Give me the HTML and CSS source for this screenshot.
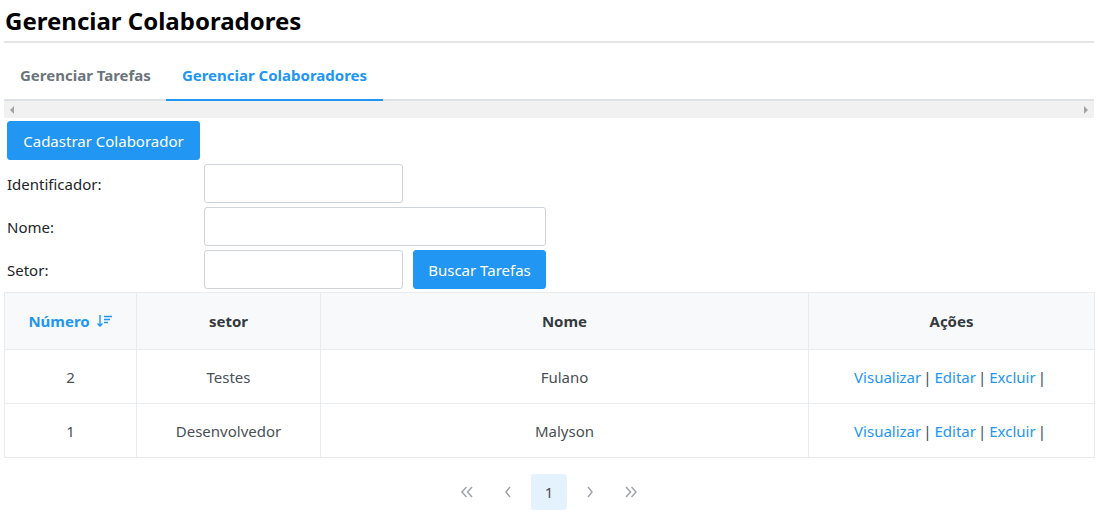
FILE: index.html
```html
<!DOCTYPE html>
<html lang="pt-BR">
<head>
<meta charset="utf-8">
<title>Gerenciar Colaboradores</title>
<link rel="stylesheet" href="styles.css">
</head>
<body>
<div class="page">
  <h1 class="title">Gerenciar Colaboradores</h1>
  <div class="tabs">
    <a class="tab">Gerenciar Tarefas</a>
    <a class="tab active">Gerenciar Colaboradores</a>
  </div>
  <div class="hscroll">
    <span class="arrow left"></span>
    <span class="arrow right"></span>
  </div>
  <button class="btn btn-cad">Cadastrar Colaborador</button>
  <div class="form">
    <div class="row">
      <label class="lbl">Identificador:</label>
      <input class="inp short" type="text">
    </div>
    <div class="row">
      <label class="lbl">Nome:</label>
      <input class="inp long" type="text">
    </div>
    <div class="row">
      <label class="lbl">Setor:</label>
      <input class="inp short" type="text">
      <button class="btn btn-search">Buscar Tarefas</button>
    </div>
  </div>
  <table class="grid">
    <colgroup>
      <col class="c1"><col class="c2"><col class="c3"><col class="c4">
    </colgroup>
    <thead>
      <tr>
        <th class="sorted">Número <svg class="sort" width="16" height="14" viewBox="0 0 16 14"><path d="M3 1v11M0.5 9.5L3 12l2.5-2.5" fill="none" stroke="currentColor" stroke-width="1.4"/><path d="M7 2.5h8M7 5.5h6M7 8.5h4" fill="none" stroke="currentColor" stroke-width="1.4"/></svg></th>
        <th>setor</th>
        <th>Nome</th>
        <th>Ações</th>
      </tr>
    </thead>
    <tbody>
      <tr>
        <td>2</td><td>Testes</td><td>Fulano</td>
        <td><a class="lnk">Visualizar</a><span class="sep">|</span><a class="lnk">Editar</a><span class="sep">|</span><a class="lnk">Excluir</a><span class="sep">|</span></td>
      </tr>
      <tr>
        <td>1</td><td>Desenvolvedor</td><td>Malyson</td>
        <td><a class="lnk">Visualizar</a><span class="sep">|</span><a class="lnk">Editar</a><span class="sep">|</span><a class="lnk">Excluir</a><span class="sep">|</span></td>
      </tr>
    </tbody>
  </table>
  <div class="pager">
    <span class="pg icon"><svg width="16" height="14" viewBox="0 0 16 14"><path d="M7.5 2L3 7l4.5 5M13 2l-4.5 5 4.5 5" fill="none" stroke="currentColor" stroke-width="1.5"/></svg></span>
    <span class="pg icon"><svg width="14" height="14" viewBox="0 0 14 14"><path d="M9 2L5 7l4 5" fill="none" stroke="currentColor" stroke-width="1.5"/></svg></span>
    <span class="pg current">1</span>
    <span class="pg icon"><svg width="14" height="14" viewBox="0 0 14 14"><path d="M5 2l4 5-4 5" fill="none" stroke="currentColor" stroke-width="1.5"/></svg></span>
    <span class="pg icon"><svg width="16" height="14" viewBox="0 0 16 14"><path d="M3 2l4.5 5L3 12M8.5 2L13 7l-4.5 5" fill="none" stroke="currentColor" stroke-width="1.5"/></svg></span>
  </div>
</div>
</body>
</html>
```
FILE: styles.css
```css
* { box-sizing: border-box; }
body {
  margin: 0;
  font-family: "Noto Sans", "Open Sans", sans-serif;
  font-size: 15px;
  color: #495057;
  background: #fff;
}
.page { padding: 0 6px 0 4px; }
.title {
  margin: 0;
  padding: 4px 0 0 1px;
  height: 43px;
  font-size: 24px;
  font-weight: 700;
  color: #000;
  border-bottom: 2px solid #e4e4e4;
  line-height: 34px;
}
.tabs {
  display: flex;
  border-bottom: 2px solid #dee2e6;
  height: 58px;
}
.tab {
  display: block;
  height: 58px;
  padding: 8px 16px 0 16px;
  line-height: 48px;
  font-size: 15px;
  font-weight: 700;
  color: #6c757d;
  border-bottom: 2px solid transparent;
}
.tab:first-child { padding-right: 15px; }
.tab.active {
  color: #2196f3;
  border-bottom-color: #2196f3;
}
.hscroll {
  position: relative;
  height: 17px;
  background: #f1f1f1;
}
.arrow {
  position: absolute;
  top: 5px;
  width: 0; height: 0;
  border-top: 4px solid transparent;
  border-bottom: 4px solid transparent;
}
.arrow.left { left: 6px; border-right: 4px solid #a3a3a3; }
.arrow.right { right: 6px; border-left: 4px solid #a3a3a3; }
.btn {
  font-family: inherit;
  font-size: 15px;
  color: #fff;
  background: #2196f3;
  border: 1px solid #2196f3;
  border-radius: 3px;
  height: 39px;
  padding: 0;
  white-space: nowrap;
  text-align: center;
}
.btn-cad { margin: 3px 0 0 3px; width: 193px; display: block; }
.form { display: flex; flex-direction: column; gap: 4px; margin: 4px 0 3px 3px; }
.row { display: flex; align-items: center; }
.lbl { width: 197px; font-size: 15px; color: #212529; }
.inp {
  height: 39px;
  border: 1px solid #ced4da;
  border-radius: 3px;
  font-family: inherit;
  font-size: 15px;
}
.inp.short { width: 199px; }
.inp.long { width: 342px; }
.btn-search { margin-left: 10px; width: 133px; }
.grid {
  width: 100%;
  border-collapse: collapse;
  table-layout: fixed;
}
.c1 { width: 132px; }
.c2 { width: 184px; }
.c3 { width: 488px; }
.c4 { width: 286px; }
.grid th, .grid td {
  border: 1px solid #e9ecef;
  text-align: center;
  font-size: 15px;
}
.grid th {
  background: #f8f9fa;
  color: #343a40;
  font-weight: 700;
  height: 57px;
}
.grid th.sorted { color: #2196f3; }
.sort { vertical-align: -1px; margin-left: 3px; }
.grid td { height: 54px; color: #495057; }
.lnk { color: #2196f3; }
.sep { color: #3b4a6b; margin: 0 3px 0 2px; }
.pager {
  display: flex;
  justify-content: center;
  align-items: center;
  padding: 16px 0 0;
}
.pg {
  width: 36px;
  height: 36px;
  margin: 0 2.5px;
  display: flex;
  align-items: center;
  justify-content: center;
  color: #6c757d;
  border-radius: 3px;
}
.pg.icon { color: #a0a4a8; }
.pg.current { background: #e3f2fd; color: #495057; font-size: 15px; }
```
